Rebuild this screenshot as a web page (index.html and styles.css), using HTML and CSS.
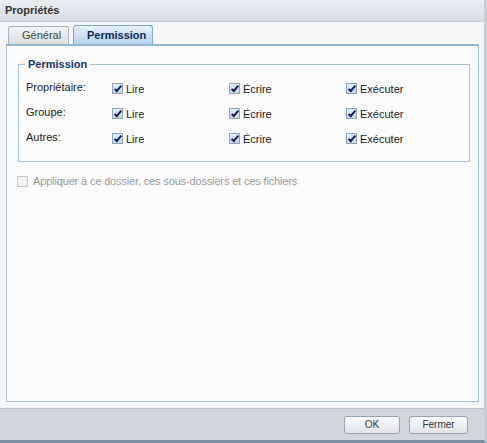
FILE: index.html
```html
<!DOCTYPE html>
<html>
<head>
<meta charset="utf-8">
<link rel="stylesheet" href="styles.css">
</head>
<body>
<div class="window">
  <div class="titlebar">Propriétés</div>
  <div class="main">
    <div class="tabs">
      <div class="tab">Général</div>
      <div class="tab active">Permission</div>
    </div>
    <div class="panel">
      <div class="fieldset">
        <div class="legend">Permission</div>
        <div class="row">
          <div class="label">Propriétaire:</div>
          <div class="cell"><span class="cb checked"></span>Lire</div>
          <div class="cell"><span class="cb checked"></span>Écrire</div>
          <div class="cell"><span class="cb checked"></span>Exécuter</div>
        </div>
        <div class="row">
          <div class="label">Groupe:</div>
          <div class="cell"><span class="cb checked"></span>Lire</div>
          <div class="cell"><span class="cb checked"></span>Écrire</div>
          <div class="cell"><span class="cb checked"></span>Exécuter</div>
        </div>
        <div class="row">
          <div class="label">Autres:</div>
          <div class="cell"><span class="cb checked"></span>Lire</div>
          <div class="cell"><span class="cb checked"></span>Écrire</div>
          <div class="cell"><span class="cb checked"></span>Exécuter</div>
        </div>
      </div>
      <div class="apply"><span class="cb disabled"></span>Appliquer à ce dossier, ces sous-dossiers et ces fichiers</div>
    </div>
  </div>
  <div class="footer">
    <button class="btn">OK</button>
    <button class="btn">Fermer</button>
  </div>
</div>
</body>
</html>
```
FILE: styles.css
```css
html, body {
  margin: 0;
  padding: 0;
  width: 487px;
  height: 443px;
  overflow: hidden;
  background: #6f7f8f;
}
.window {
  width: 484px;
  height: 440px;
  display: flex;
  flex-direction: column;
  font-family: "Liberation Sans", Arial, sans-serif;
  font-size: 11px;
  color: #222;
  background: #f4f5f6;
  border-right: 3px solid #c8cdd2;
  border-bottom: 3px solid #7d8fa0;
}
.titlebar {
  height: 21px;
  line-height: 21px;
  padding-left: 5px;
  font-weight: bold;
  color: #333;
  background: linear-gradient(#eceef0, #d9dde1);
  border-bottom: 1px solid #c9ced3;
  flex: none;
}
.main {
  flex: 1;
  display: flex;
  flex-direction: column;
  padding: 4px 5px 6px 6px;
  background: #f6f7f8;
}
.tabs {
  display: flex;
  gap: 4px;
  padding-left: 2px;
  height: 18px;
  align-items: flex-end;
}
.tab {
  height: 17px;
  line-height: 17px;
  padding: 0 13px;
  border: 1px solid #a3b3c0;
  border-bottom: none;
  border-radius: 3px 3px 0 0;
  color: #444;
  background: linear-gradient(#f3f4f5, #d9dde1);
  width: 33px;
  text-align: center;
}
.tab.active {
  height: 18px;
  line-height: 18px;
  font-weight: bold;
  color: #0f2a57;
  width: 52px;
  border-color: #7ea9c8;
  background: linear-gradient(#e6f0f8, #b5d2ea);
}
.panel {
  flex: 1;
  border: 1px solid #a7bdca;
  border-top: 2px solid #92b6d0;
  background: #fbfbfb;
  padding: 18px 8px 0 11px;
}
.fieldset {
  position: relative;
  box-sizing: border-box;
  border: 1px solid #a9c0cd;
  height: 98px;
  padding: 11px 0 0 7px;
}
.legend {
  position: absolute;
  top: -7px;
  left: 6px;
  padding: 0 3px;
  background: #fbfbfb;
  font-weight: bold;
  color: #15346a;
  line-height: 13px;
}
.row {
  display: flex;
  height: 25px;
  align-items: center;
}
.label {
  width: 86px;
  color: #222;
  position: relative;
  top: -2px;
}
.cell {
  display: flex;
  align-items: center;
  width: 117px;
}
.cell:last-child { width: auto; }
.cb {
  display: inline-block;
  box-sizing: border-box;
  width: 11px;
  height: 11px;
  margin-right: 3px;
  border: 1px solid #8aa3b6;
  background: linear-gradient(#e6eff6, #c0d5e5);
  position: relative;
}
.cb.checked::after {
  content: "";
  position: absolute;
  left: 3px;
  top: 0px;
  width: 2px;
  height: 6px;
  border: solid #0d1f5a;
  border-width: 0 2px 2px 0;
  transform: rotate(40deg);
}
.cb.disabled {
  border-color: #c2c6ca;
  background: #f4f4f4;
}
.apply {
  display: flex;
  align-items: center;
  margin-top: 13px;
  margin-left: -1px;
  color: #9a9a9a;
  letter-spacing: -0.15px;
}
.apply .cb { margin-right: 5px; }
.footer {
  flex: none;
  height: 31px;
  border-top: 1px solid #bcc3ca;
  background: #d2d6db;
  display: flex;
  justify-content: flex-end;
  align-items: center;
  gap: 9px;
  padding-right: 16px;
}
.btn {
  width: 56px;
  height: 18px;
  font-family: "Liberation Sans", Arial, sans-serif;
  font-size: 10px;
  color: #333;
  border: 1px solid #9aa4ad;
  border-radius: 3px;
  background: linear-gradient(#fbfbfc, #e1e4e7);
  padding: 0;
}
.btn + .btn { width: 59px; }
```
